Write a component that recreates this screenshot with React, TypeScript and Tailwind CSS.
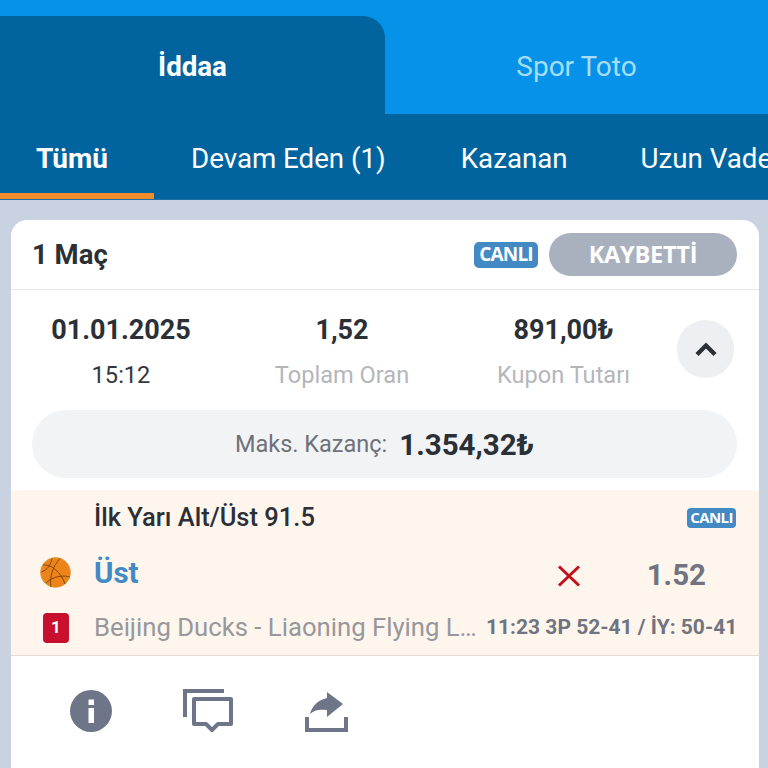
import React from "react";

const Canli = ({ small }: { small?: boolean }) => (
  <span
    className={
      small
        ? "flex h-[20px] w-[49px] items-center justify-center rounded-[4px] bg-[#4389c4] text-[15px] font-bold text-white [font-family:'Open_Sans',sans-serif] tracking-[-0.6px]"
        : "flex h-[26px] w-[64px] items-center justify-center rounded-[5px] bg-[#4389c4] text-[19px] font-bold text-white [font-family:'Open_Sans',sans-serif] tracking-[-0.8px]"
    }
  >
    CANLI
  </span>
);

const Ball = () => (
  <svg width="31" height="31" viewBox="0 0 31 31" fill="none">
    <circle cx="15.5" cy="15.5" r="15" fill="#ec8419" stroke="#d9a24a" strokeWidth="0.8" />
    <g stroke="#7c430f" strokeWidth="0.9" fill="none">
      <path d="M3 8C11 7 21 15 25 27" />
      <path d="M12 1.5C11 8 7 13 1.5 15" />
      <path d="M20 1.5C13 9 9 20 11 30" />
      <path d="M6 26C13 19 23 18 30 20" />
    </g>
  </svg>
);

const Col = ({ a, b, bClass, w }: { a: string; b: string; bClass: string; w: string }) => (
  <div className={`flex flex-col items-center ${w}`}>
    <span className="text-[27px] leading-[30px] font-bold text-[#2b2f36]">{a}</span>
    <span className={`mt-[15px] text-[23.6px] leading-[30px] ${bClass}`}>{b}</span>
  </div>
);

export default function App() {
  return (
    <div className="flex h-[768px] w-[768px] flex-col overflow-hidden bg-[#c8d2e0] [font-family:Roboto,sans-serif]">
      <div className="h-[114px] bg-[#0592e8] pt-[16px]">
        <div className="flex h-[98px]">
          <div className="flex w-[385px] items-center justify-center rounded-tr-[22px] bg-[#02649f] pt-[4px]">
            <span className="text-[27.7px] font-bold text-white">İddaa</span>
          </div>
          <div className="flex flex-1 items-center justify-center pt-[4px]">
            <span className="text-[28px] text-[#a6def9]">Spor Toto</span>
          </div>
        </div>
      </div>
      <div className="flex h-[86px] overflow-hidden border-b-[1px] border-[#1c6fa6] bg-[#02649f] text-[27.7px] whitespace-nowrap text-white">
        <div className="flex h-[85px] w-[154px] shrink-0 items-center justify-center border-b-[6px] border-[#f28c28] pt-[11px] pr-[10px] text-[28px] font-bold">
          Tümü
        </div>
        <div className="flex shrink-0 items-center pt-[4px] pl-[37px]">Devam Eden (1)</div>
        <div className="flex shrink-0 items-center pt-[4px] pl-[75px]">Kazanan</div>
        <div className="flex shrink-0 items-center pt-[4px] pl-[73px]">Uzun Vadeli</div>
      </div>

      <div className="mt-[20px] mr-[9px] ml-[11px] flex flex-1 flex-col overflow-hidden rounded-t-[16px] bg-white">
        <div className="flex h-[70px] items-center border-b border-[#e4e6ea] pr-[22px] pl-[21px]">
          <span className="flex-1 text-[27.5px] font-bold text-[#2b2f36]">1 Maç</span>
          <Canli />
          <span className="ml-[11px] flex h-[43px] w-[188px] items-center justify-center rounded-full bg-[#a9b1bf] text-[23.6px] font-bold tracking-[-0.3px] text-white [font-family:'Open_Sans',sans-serif]">
            KAYBETTİ
          </span>
        </div>

        <div className="flex h-[120px] items-start pt-[25px]">
          <div className="flex">
            <Col a="01.01.2025" b="15:12" bClass="text-[#33373d]" w="w-[220px]" />
            <Col a="1,52" b="Toplam Oran" bClass="text-[#b4b6ba]" w="w-[222px]" />
            <Col a="891,00₺" b="Kupon Tutarı" bClass="text-[#b4b6ba]" w="w-[221px]" />
          </div>
          <div className="mt-[5px] ml-[3px] flex h-[58px] w-[57px] items-center justify-center rounded-full bg-[#eeeff2]">
            <svg width="24" height="16" viewBox="0 0 24 16" fill="none">
              <path d="M3 13.5 12 4.5 21 13.5" stroke="#2b2f36" strokeWidth="4.4" />
            </svg>
          </div>
        </div>

        <div className="mr-[22px] ml-[21px] flex h-[68px] items-center justify-center rounded-full bg-[#f2f3f5] pt-[2px]">
          <span className="text-[23.5px] text-[#6e7178]">Maks. Kazanç:</span>
          <span className="ml-[12px] text-[29.5px] font-bold text-[#2b2f36]">1.354,32₺</span>
        </div>

        <div className="mt-[12px] flex h-[166px] flex-col border-b-[1px] border-[#e2dcd6] bg-[#fef5ec]">
          <div className="flex h-[55px] items-center justify-between pr-[23px] pl-[83px]">
            <span className="text-[25.5px] leading-none font-medium text-[#2b2f36]">İlk Yarı Alt/Üst 91.5</span>
            <Canli small />
          </div>
          <div className="flex h-[55px] items-center pr-[53px] pl-[29px]">
            <Ball />
            <span className="ml-[23px] flex-1 pt-[2px] text-[29.5px] font-bold text-[#4389c4]">Üst</span>
            <svg width="24" height="22" viewBox="0 0 24 22" fill="none" className="mt-[6px] mr-[66px]">
              <path d="M2 1.5 22 20.5M22 1.5 2 20.5" stroke="#c10f1c" strokeWidth="3" />
            </svg>
            <span className="mt-[6px] text-[29.5px] font-bold text-[#6f7480]">1.52</span>
          </div>
          <div className="flex h-[55px] items-center pr-[23px] pl-[32px]">
            <span className="flex h-[30px] w-[26px] shrink-0 items-center justify-center rounded-[4px] bg-[#c8102e] text-[17px] font-bold text-white">
              1
            </span>
            <span className="ml-[25px] w-[384px] shrink-0 truncate text-[25.7px] text-[#96989c]">
              Beijing Ducks - Liaoning Flying Leopards
            </span>
            <span className="ml-[8px] text-[21px] font-bold whitespace-nowrap text-[#6f7480]">11:23 3P 52-41 / İY: 50-41</span>
          </div>
        </div>

        <div className="flex flex-1 items-start pt-[34px] pl-[59px]">
          <svg width="42" height="42" viewBox="0 0 42 42">
            <circle cx="21" cy="21" r="21" fill="#6f7588" />
            <rect x="18.5" y="9.5" width="5.5" height="5.5" fill="#fff" />
            <rect x="18.5" y="18" width="5.5" height="15" fill="#fff" />
          </svg>
          <svg width="50" height="44" viewBox="0 0 50 44" fill="none" className="-mt-[1px] ml-[71px]">
            <path d="M2 28V2H41" stroke="#6f7588" strokeWidth="4" />
            <path d="M11 10H48V35H35L29 41 23 35H11Z" stroke="#6f7588" strokeWidth="4" strokeLinejoin="round" />
          </svg>
          <svg width="43" height="40" viewBox="0 0 43 40" fill="none" className="mt-[2px] ml-[72px]">
            <path d="M2 25V38H41V25" stroke="#6f7588" strokeWidth="4" />
            <path d="M22 0 38 12 22 25V18C14 17 9 18 5 22 7 14 13 8 22 6Z" fill="#6f7588" />
          </svg>
        </div>
      </div>
    </div>
  );
}
